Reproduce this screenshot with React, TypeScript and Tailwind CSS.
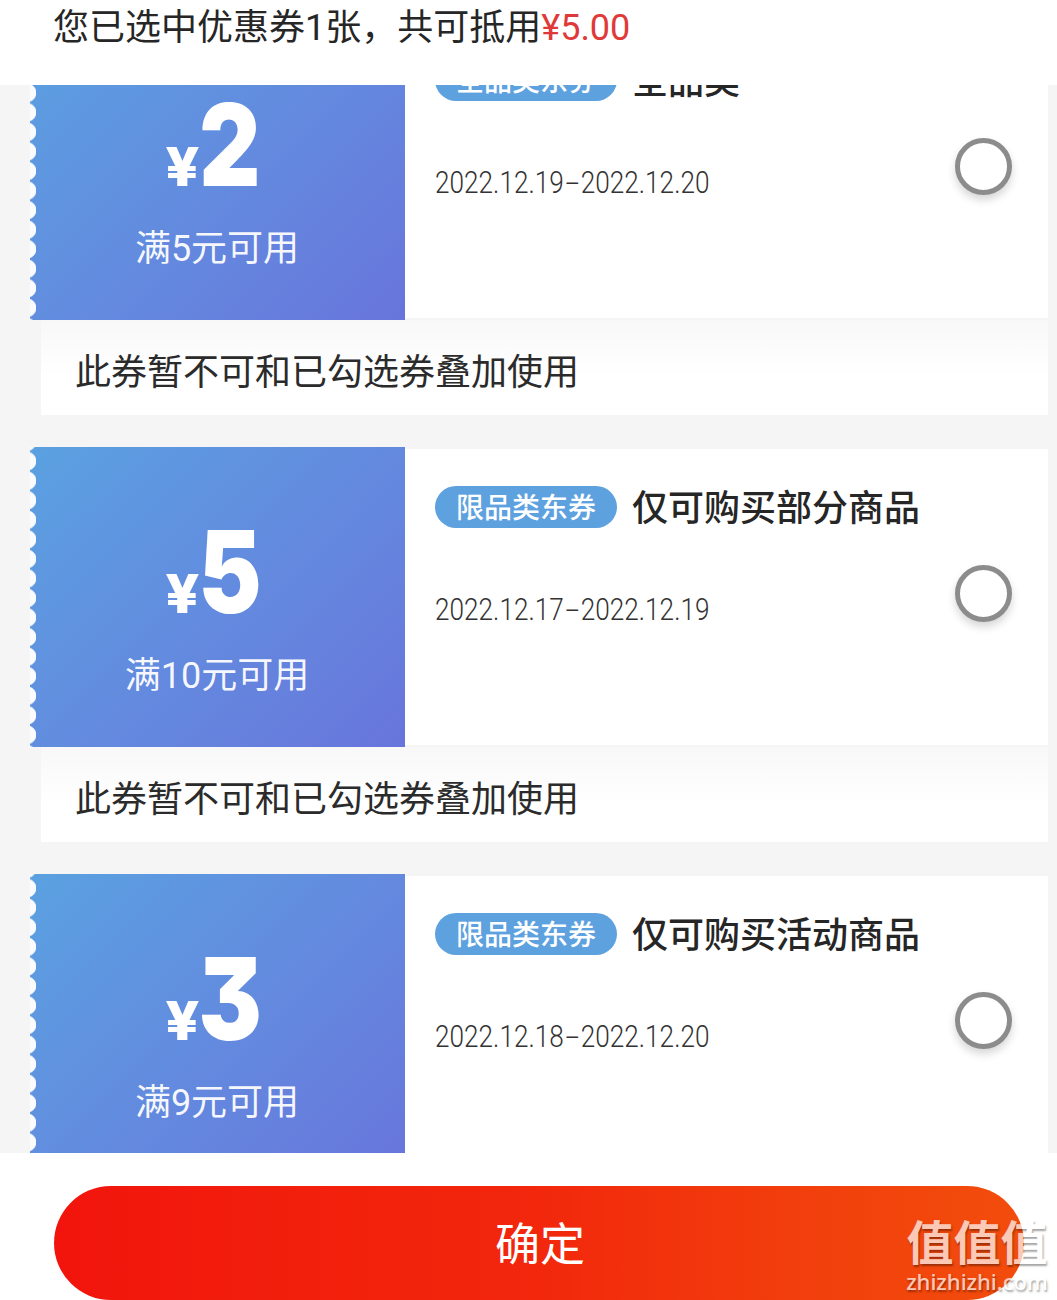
import { useState } from 'react';
import clsx from 'clsx';

type Coupon = {
  id: string;
  amount: number;
  condition: string;
  tag: string;
  scope: string;
  start: string;
  end: string;
};

const coupons: Coupon[] = [
  { id: 'q1', amount: 2, condition: '满5元可用', tag: '全品类东券', scope: '全品类', start: '2022.12.19', end: '2022.12.20' },
  { id: 'q2', amount: 5, condition: '满10元可用', tag: '限品类东券', scope: '仅可购买部分商品', start: '2022.12.17', end: '2022.12.19' },
  { id: 'q3', amount: 3, condition: '满9元可用', tag: '限品类东券', scope: '仅可购买活动商品', start: '2022.12.18', end: '2022.12.20' },
];

function CouponAmount({ amount, condition }: { amount: number; condition: string }) {
  return (
    <div className="flex h-[300px] w-[375px] shrink-0 bg-linear-135 from-[#5aa1e1] to-[#6875dc] text-white">
      {/* scalloped edge */}
      <div className="h-full w-[6px] bg-[radial-gradient(circle_at_-3px_50%,#f9fbfc_8.8px,transparent_9.8px)] bg-[length:6px_19.55px] bg-[position:0_4.4px]" />
      <div className="flex flex-1 flex-col items-center pr-[7px] pt-[68px]">
        <div className="flex h-[114px] items-baseline justify-center gap-[3px] pr-[10px] font-['Inter',sans-serif] leading-none">
          <span className="flex w-[33px] justify-center text-[53px] font-extrabold">
            <span className="scale-x-[1.12]">¥</span>
          </span>
          <span className="flex w-[56px] justify-center text-[114px] font-black [font-feature-settings:'cv09']">
            <span className="scale-x-[0.83]">{amount}</span>
          </span>
        </div>
        <p className="mt-[27px] h-[40px] text-[36px] leading-[40px] text-white/95">{condition}</p>
      </div>
    </div>
  );
}

function CouponCard({ coupon, checked, onToggle }: { coupon: Coupon; checked: boolean; onToggle: () => void }) {
  return (
    <div className="mb-[32px] pr-[9px] pl-[30px]">
      <div className="flex h-[300px] items-center">
        <CouponAmount amount={coupon.amount} condition={coupon.condition} />
        <div className="flex h-[296px] flex-1 justify-between bg-white pr-[36px] pl-[30px]">
          <div className="flex flex-col items-start pt-[37px]">
            <div className="flex h-[42px] items-center gap-[15px]">
              <span className="flex h-[42px] w-[182px] items-center justify-center rounded-full bg-[#5da1df] pt-[3px] text-[28px] leading-none font-medium text-white">
                {coupon.tag}
              </span>
              <span className="pt-[4px] text-[36px] leading-[42px] font-medium whitespace-nowrap text-[#262626]">{coupon.scope}</span>
            </div>
            <p className="mt-[62px] flex origin-left scale-x-[0.845] text-[31px] leading-[40px] font-[350] whitespace-nowrap text-[#333]">
              <span>{coupon.start}</span>
              <span className="flex w-[20px] justify-center">
                <span className="scale-x-[1.9]">-</span>
              </span>
              <span>{coupon.end}</span>
            </p>
          </div>
          <button
            onClick={onToggle}
            className={clsx(
              'mt-[115.5px] size-[57px] shrink-0 rounded-full border-[5px] shadow-[0_5px_8px_rgba(0,0,0,0.16)]',
              checked ? 'border-[#f2270c] bg-[#f2270c]' : 'border-[#8c8c8c] bg-white'
            )}
          />
        </div>
      </div>
      <div className="ml-[11px] flex h-[95px] items-center bg-linear-to-b from-[#f8f8f8] to-white to-60% pt-[10px] pl-[34px]">
        <p className="text-[36px] leading-[40px] text-[#2b2b2b]">此券暂不可和已勾选券叠加使用</p>
      </div>
    </div>
  );
}

function Watermark() {
  return (
    <div className="absolute right-[9px] bottom-[6px] flex w-[142px] flex-col items-center text-white opacity-70 [text-shadow:1px_2px_2px_rgba(0,0,0,0.5)]">
      <span className="text-[47px] leading-[48px] font-bold">值值值</span>
      <span className="font-['Noto_Sans',sans-serif] text-[22px] leading-[26px] font-medium">zhizhizhi.com</span>
    </div>
  );
}

export default function App() {
  const [selected, setSelected] = useState<string | null>(null);

  return (
    <div className="relative flex h-[1300px] w-[1057px] flex-col overflow-hidden bg-white font-['Roboto','Noto_Sans_CJK_SC',sans-serif]">
      <header className="h-[85px] shrink-0 pt-[8px] pl-[53px] text-[36px] leading-[40px] text-[#262626]">
        您已选中优惠券1张，共可抵用<span className="text-[#e0393a]">¥5.00</span>
      </header>

      <main className="h-[1068px] shrink-0 overflow-hidden bg-[#f5f5f5]">
        <div className="-mt-[65px]">
          {coupons.map((c) => (
            <CouponCard
              key={c.id}
              coupon={c}
              checked={selected === c.id}
              onToggle={() => setSelected(selected === c.id ? null : c.id)}
            />
          ))}
        </div>
      </main>

      <footer className="pt-[33px] pr-[33px] pl-[54px]">
        <button className="h-[114px] w-full rounded-full bg-linear-to-r from-[#f2140c] via-[#f2270c] to-[#f24d0c] pt-[6px] pl-[2px] text-[45px] text-white">
          确定
        </button>
      </footer>

      <Watermark />
    </div>
  );
}
